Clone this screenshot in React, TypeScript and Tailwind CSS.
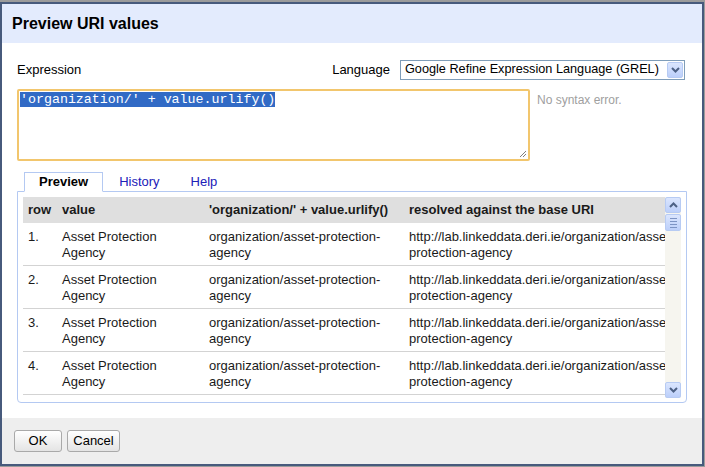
import type { ReactNode } from 'react'

const rows = ['1.', '2.', '3.', '4.']

function Chevron({ up = false }: { up?: boolean }) {
  return (
    <svg width="9" height="6" viewBox="0 0 9 6" className="block">
      <path
        d={up ? 'M1 5 L4.5 1.5 L8 5' : 'M1 1 L4.5 4.5 L8 1'}
        fill="none"
        stroke="#4d6185"
        strokeWidth="2"
      />
    </svg>
  )
}

function XpButton({ children, className = '' }: { children: ReactNode; className?: string }) {
  return (
    <div
      className={`flex shrink-0 items-center justify-center rounded-[2px] border border-[#b7cbf3] bg-gradient-to-b from-[#dbe6fe] to-[#bccffa] ${className}`}
    >
      {children}
    </div>
  )
}

function Cell({ children, className = '' }: { children: ReactNode; className?: string }) {
  return <td className={`whitespace-nowrap pl-[5px] pt-[6px] pb-[4px] align-top ${className}`}>{children}</td>
}

export default function App() {
  return (
    <div className="h-[467px] w-[705px] overflow-hidden bg-[#9b9b9b] pt-[2px] font-['Liberation_Sans',Arial,sans-serif] text-[13px] text-black">
      <div className="flex h-[464px] w-[704px] flex-col border-2 border-[#475a7c] bg-white">
        {/* title bar */}
        <div className="flex h-[39px] shrink-0 items-center bg-[#e3ebfd] pl-[10px]">
          <h1 className="text-[16px] font-bold">Preview URI values</h1>
        </div>

        {/* body */}
        <div className="flex h-[375px] shrink-0 flex-col px-[15px] pt-[17px]">
          <div className="flex h-[20px] items-center">
            <span>Expression</span>
            <span className="ml-auto mr-[10px]">Language</span>
            <div className="mr-[2px] flex h-[20px] w-[285px] items-center border border-[#7f9db9] pl-[4px] pr-[1px]">
              <span className="min-w-0 flex-1 overflow-hidden whitespace-nowrap text-[12.7px]">
                Google Refine Expression Language (GREL)
              </span>
              <XpButton className="h-[16px] w-[16px]">
                <Chevron />
              </XpButton>
            </div>
          </div>

          <div className="mt-[9px] flex">
            <div className="relative h-[72px] w-[513px] rounded-[2px] border-2 border-[#f2c66d] px-[1px] pt-[1px] font-['Liberation_Mono','Courier_New',monospace] text-[13.3px] leading-[15px]">
              <span className="bg-[#316ac5] text-white">'organization/' + value.urlify()</span>
              <svg width="9" height="9" viewBox="0 0 9 9" className="absolute bottom-[1px] right-[1px]">
                <path d="M8 2 L2 8 M8 5 L5 8" stroke="#808080" strokeWidth="1" />
              </svg>
            </div>
            <span className="ml-[7px] mt-[2px] text-[12px] text-[#a0a0a0]">No syntax error.</span>
          </div>

          {/* tabs */}
          <div className="relative z-10 mt-[11px] -mb-px flex h-[20px] pl-[7px]">
            <div className="flex h-[20px] items-center border border-b-white border-[#b4c9f2] bg-white px-[14px] font-bold">
              Preview
            </div>
            <div className="ml-[2px] flex h-[20px] items-center px-[14px] text-[#2020b8]">History</div>
            <div className="ml-[3px] flex h-[20px] items-center px-[14px] text-[#2020b8]">Help</div>
          </div>

          <div className="flex h-[212px] rounded-b-[4px] border border-[#b4c9f2] px-[5px] pt-[5px]">
            <div className="h-[201px] w-[642px] overflow-hidden">
              <table className="w-[700px] border-collapse text-left leading-[16px] text-[#1a1a1a]">
                <thead>
                  <tr className="h-[26px] bg-[#dfdfdf] font-bold">
                    <th className="w-[34px] pl-[5px]">row</th>
                    <th className="w-[147px] pl-[5px]">value</th>
                    <th className="w-[200px] pl-[5px]">'organization/' + value.urlify()</th>
                    <th className="pl-[5px]">resolved against the base URI</th>
                  </tr>
                </thead>
                <tbody>
                  {rows.map((r) => (
                    <tr key={r} className="border-b border-[#d3d3d3]">
                      <Cell>{r}</Cell>
                      <Cell>
                        Asset Protection
                        <br />
                        Agency
                      </Cell>
                      <Cell>
                        organization/asset-protection-
                        <br />
                        agency
                      </Cell>
                      <Cell>
                        http://lab.linkeddata.deri.ie/organization/asset-
                        <br />
                        protection-agency
                      </Cell>
                    </tr>
                  ))}
                </tbody>
              </table>
            </div>

            {/* scrollbar */}
            <div className="flex h-[201px] w-[16px] flex-col bg-[#f6f5ef]">
              <XpButton className="h-[16px] w-[16px]">
                <Chevron up />
              </XpButton>
              <XpButton className="mt-[1px] h-[17px] w-[16px]">
                <div className="flex flex-col gap-[2px]">
                  <div className="h-px w-[7px] bg-[#7d94c4]" />
                  <div className="h-px w-[7px] bg-[#7d94c4]" />
                  <div className="h-px w-[7px] bg-[#7d94c4]" />
                  <div className="h-px w-[7px] bg-[#7d94c4]" />
                </div>
              </XpButton>
              <XpButton className="mt-auto h-[16px] w-[16px]">
                <Chevron />
              </XpButton>
            </div>
          </div>
        </div>

        {/* footer */}
        <div className="flex flex-1 gap-[5px] bg-[#eeeeee] pl-[12px] pt-[12px]">
          <button className="h-[22px] w-[48px] rounded-[3px] border border-[#a9a9a9] bg-gradient-to-b from-white to-[#e4e4e4]">
            OK
          </button>
          <button className="h-[22px] w-[53px] rounded-[3px] border border-[#a9a9a9] bg-gradient-to-b from-white to-[#e4e4e4]">
            Cancel
          </button>
        </div>
      </div>
    </div>
  )
}
